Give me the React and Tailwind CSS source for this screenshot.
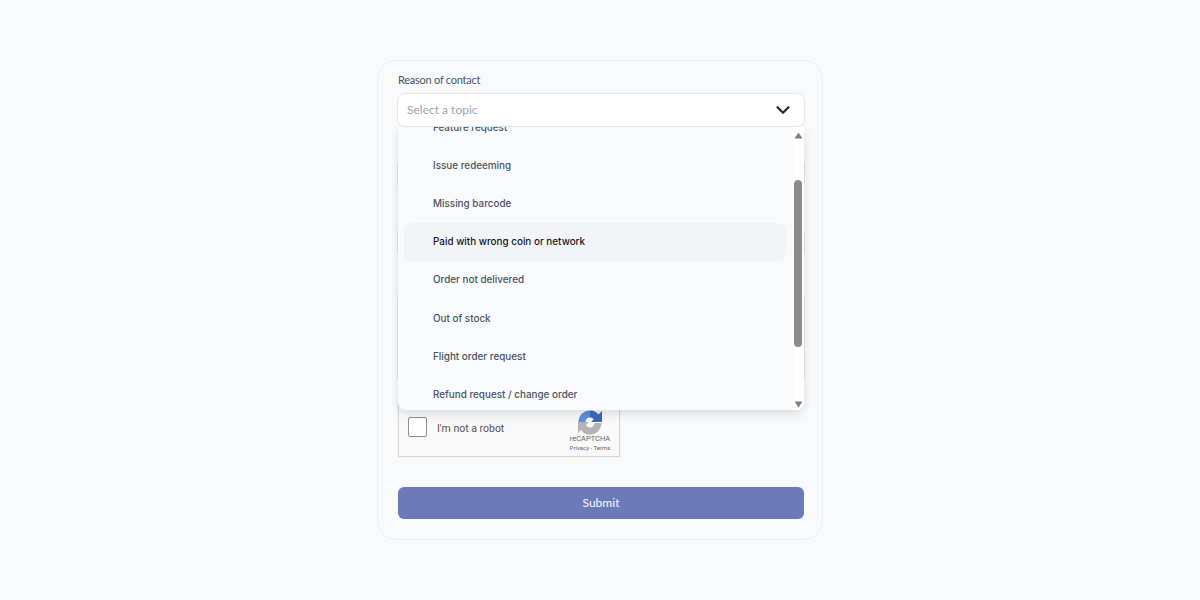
import React from "react";
import { ChevronDown } from "lucide-react";

const topics = [
  "Feature request",
  "Issue redeeming",
  "Missing barcode",
  "Paid with wrong coin or network",
  "Order not delivered",
  "Out of stock",
  "Flight order request",
  "Refund request / change order",
];

function Recaptcha() {
  return (
    <div className="w-[222px] h-[58px] bg-[#f9f9f9] border border-[#d6d6d6] shadow-[0_0_2px_rgba(0,0,0,0.08)] flex items-center pl-[9px] pr-[8px] font-['Roboto',sans-serif]">
      <div className="w-[19px] h-[20px] bg-white border border-[#8f8f8f] rounded-[2px] mt-[-2px]" />
      <span className="ml-[10px] mt-[1px] text-[10.5px] text-[#555]">I'm not a robot</span>
      <div className="ml-auto flex flex-col items-center mt-[4px] w-[42px]">
        <svg width="26" height="26" viewBox="0 0 26 26" fill="none">
          <path d="M5 13A8 8 0 0 1 13 5" stroke="#5c8ee0" strokeWidth="7" />
          <path d="M13 5A8 8 0 0 1 21 13" stroke="#3f69bf" strokeWidth="7" />
          <path d="M25 2V13H14z" fill="#3f69bf" />
          <path d="M21 14A8 8 0 0 1 5 14" stroke="#b4b4b4" strokeWidth="7" />
          <path d="M1 24V13H12z" fill="#b4b4b4" />
        </svg>
        <span className="text-[7.5px] leading-[10px] text-[#666] mt-[-1px]">reCAPTCHA</span>
        <span className="text-[6px] leading-[8px] text-[#666] whitespace-nowrap">Privacy - Terms</span>
      </div>
    </div>
  );
}

export default function App() {
  return (
    <div className="min-h-screen bg-[#f9fafc] flex justify-center pt-[60px] font-['Lato',sans-serif]">
      <form className="w-[446px] h-[480px] rounded-[20px] border border-[#eceef1] pl-[20px] pr-[18px] pt-[11px]">
        <label className="block text-[11px] tracking-[-0.25px] leading-[16px] text-[#4b5563] mb-[5px]">Reason of contact</label>

        <div className="relative">
          <div className="h-[34px] -mx-px bg-white border border-[#e8e9ec] rounded-[8px] shadow-[0_0_2px_rgba(0,0,0,0.05)] flex items-center justify-between pl-[9px] pr-[10px]">
            <span className="text-[12px] text-[#9ca3af]">Select a topic</span>
            <ChevronDown size={22} strokeWidth={2.4} className="text-[#1f2937]" />
          </div>

          {/* dropdown list, lies over the other fields */}
          <div className="absolute left-0 right-0 top-[34px] z-10 h-[283px] bg-[#f9fafc] rounded-b-[8px] shadow-[0_4px_10px_rgba(0,0,0,0.12)] flex overflow-hidden font-['Inter',sans-serif]">
            <ul className="flex-1 pl-[6px] pr-[7px] mt-[-19px]">
              {topics.map((t, i) => (
                <li
                  key={t}
                  className={
                    i === 3
                      ? "h-[38.2px] flex items-center pl-[29px] rounded-[8px] bg-[#f3f4f6] text-[9.9px] font-medium text-[#111827]"
                      : "h-[38.2px] flex items-center pl-[29px] rounded-[8px] text-[9.9px] font-medium text-[#4b5563]"
                  }
                >
                  {t}
                </li>
              ))}
            </ul>
            <div className="w-[11px] bg-white flex flex-col items-center pt-[5px] pb-[2px] pr-px">
              <svg width="9" height="7" viewBox="0 0 9 7"><path d="M4.500 0.500L8.500 6.500H0.500z" fill="#808080" /></svg>
              <div className="w-[8px] h-[167px] mt-[41px] rounded-full bg-[#8c8c8c]" />
              <svg className="mt-auto" width="9" height="7" viewBox="0 0 9 7"><path d="M0.500 0.500H8.500L4.500 6.500z" fill="#808080" /></svg>
            </div>
          </div>
        </div>

        {/* fields behind the open list */}
        <div className="h-[30px]" />
        <div className="h-[34px] -mx-px border border-[#e5e7eb] rounded-[8px]" />
        <div className="h-[34px]" />
        <div className="h-[34px] -mx-px border border-[#e5e7eb] rounded-[8px]" />
        <div className="h-[31px]" />
        <div className="h-[95px] -mx-px border border-[#e5e7eb] rounded-[8px]" />
        <div className="h-[14px]" />

        <Recaptcha />

        <button type="button" className="mt-[30px] w-full h-[32px] rounded-[6px] bg-[#6c7ab9] text-[12px] font-medium text-[#eef0fa]">
          Submit
        </button>
      </form>
    </div>
  );
}
